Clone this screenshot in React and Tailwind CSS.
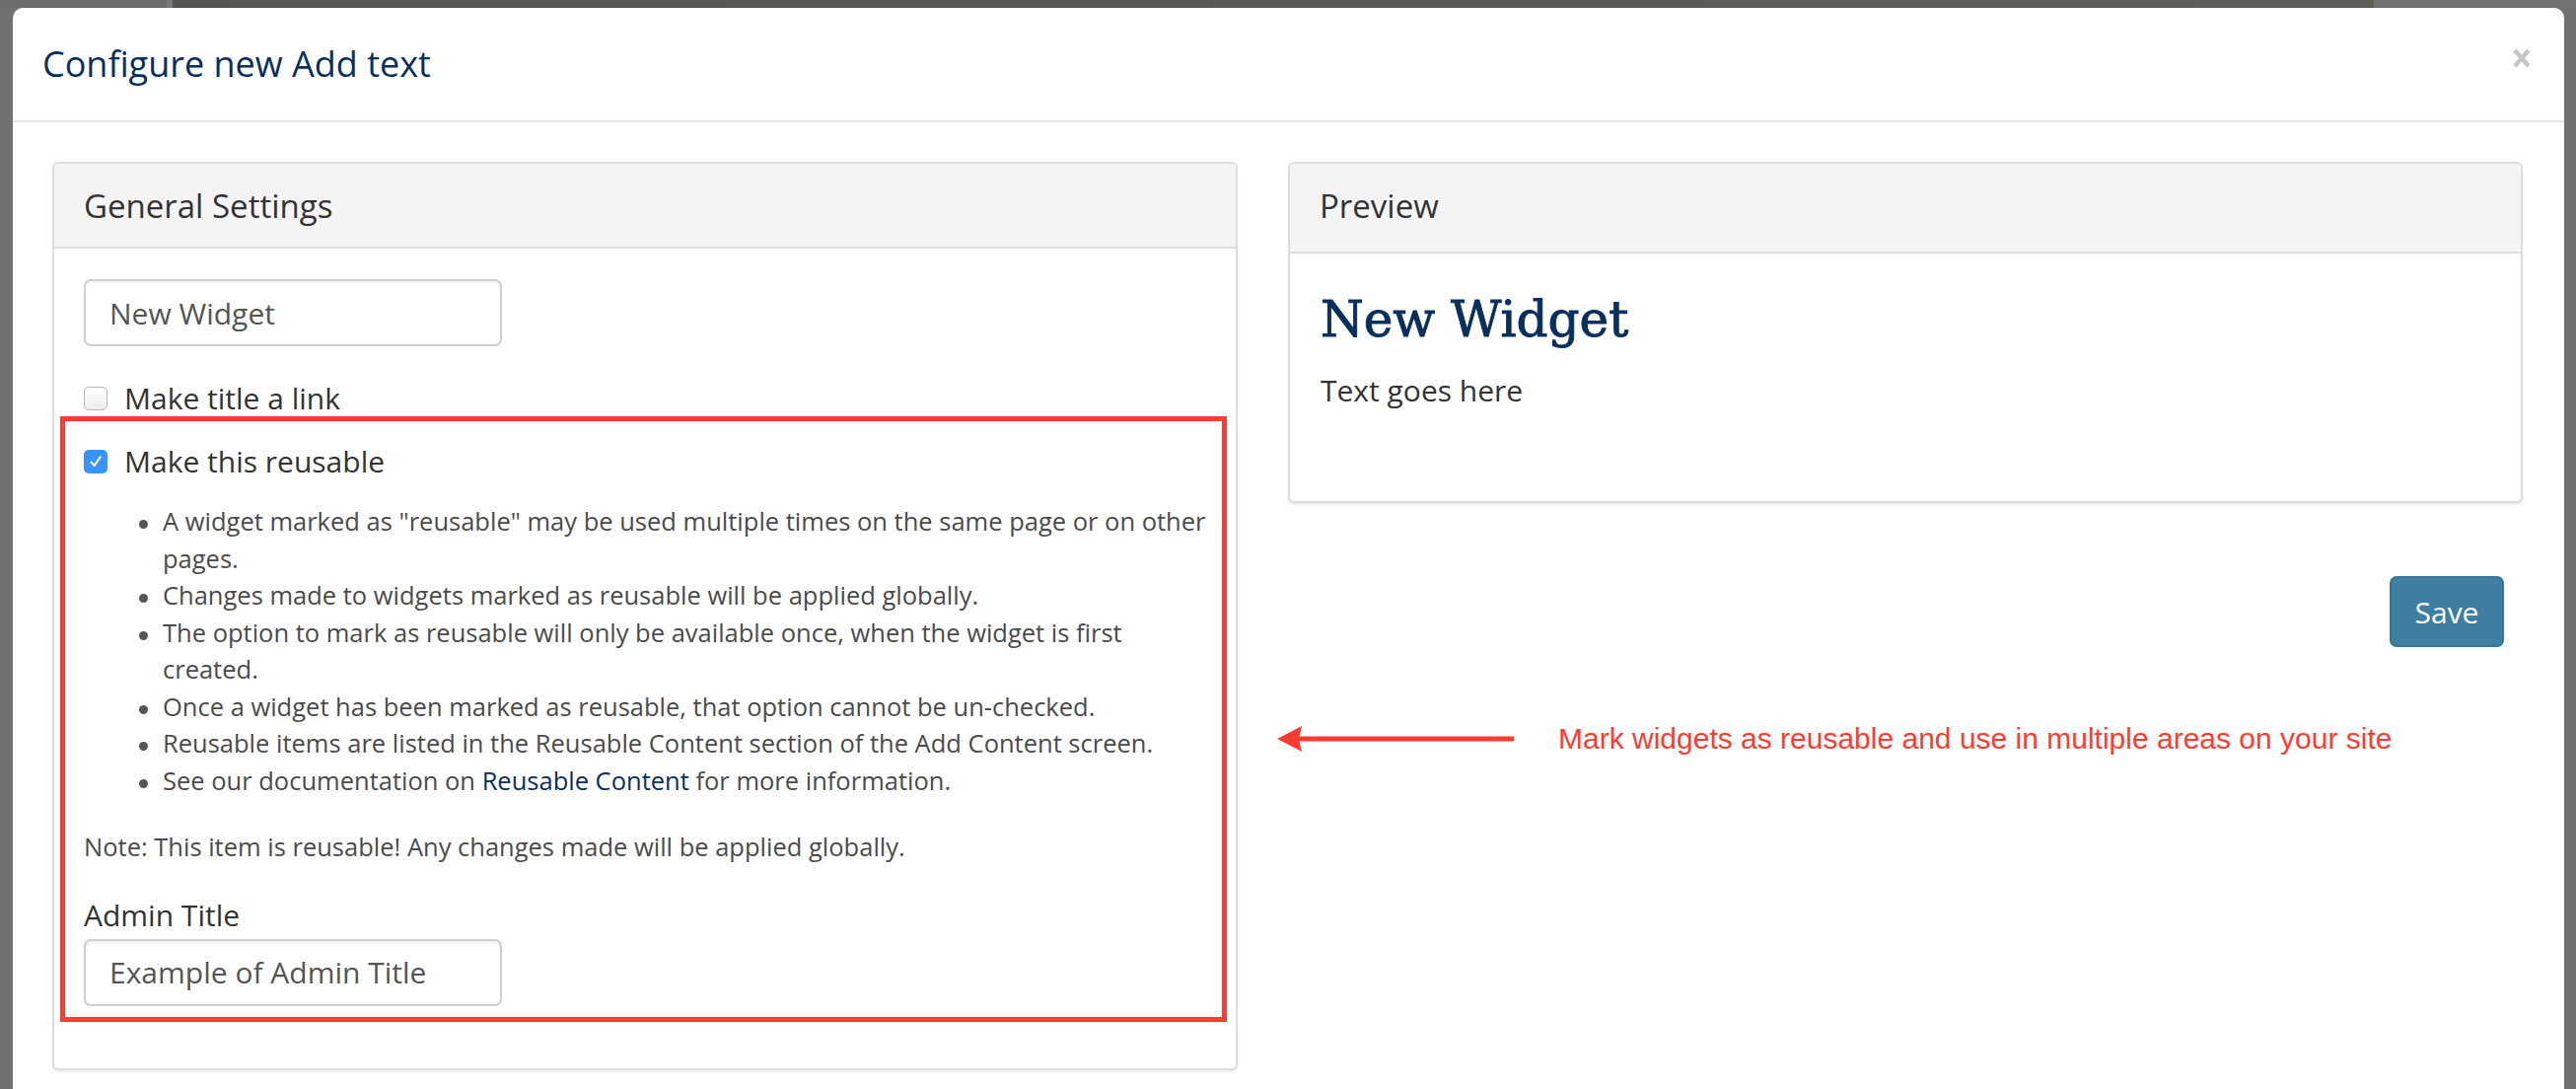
const bullets = [
  'A widget marked as "reusable" may be used multiple times on the same page or on other pages.',
  "Changes made to widgets marked as reusable will be applied globally.",
  "The option to mark as reusable will only be available once, when the widget is first created.",
  "Once a widget has been marked as reusable, that option cannot be un-checked.",
  "Reusable items are listed in the Reusable Content section of the Add Content screen.",
];

function Checkbox({ checked }) {
  if (checked) {
    return (
      <span className="inline-flex size-[24px] shrink-0 items-center justify-center rounded-[5px] bg-[#3a93f7]">
        <svg width="14" height="14" viewBox="0 0 14 14" fill="none">
          <path d="M2.5 7.5 L5.8 11 L11.5 2.5" stroke="white" strokeWidth="2.2" strokeLinecap="round" strokeLinejoin="round" />
        </svg>
      </span>
    );
  }
  return <span className="inline-block size-[24px] shrink-0 rounded-[5px] border border-[#b9b9b9] bg-gradient-to-b from-white to-[#ededed]" />;
}

function TextInput({ value }) {
  return (
    <div className="flex h-[68px] w-[424px] items-center rounded-[7px] border-2 border-[#cfcfcf] pl-[24px] text-[30px] text-[#555] shadow-[inset_0_2px_2px_rgba(0,0,0,0.06)]">
      {value}
    </div>
  );
}

function Panel({ title, headerClass, children, className }) {
  return (
    <div className={`rounded-[6px] border-2 border-[#dddddd] bg-white shadow-[0_2px_2px_rgba(0,0,0,0.08)] ${className}`}>
      <div className={`rounded-t-[5px] border-b-2 border-[#dddddd] bg-[#f4f4f4] px-[30px] text-[33px] leading-[46px] text-[#333] ${headerClass}`}>
        {title}
      </div>
      {children}
    </div>
  );
}

export default function App() {
  return (
    <div className="flex h-[1104px] w-[2612px] flex-col overflow-hidden bg-[#717171] font-['Open_Sans',sans-serif]">
      <div className="flex h-[8px] shrink-0">
        <div className="w-[169px] bg-[#6c6c6c]" />
        <div className="w-[6px] bg-[#7a7a7a]" />
        <div className="w-[2232px] bg-gradient-to-r from-[#56554f] to-[#5f5e58]" />
        <div className="flex-1 bg-[#727272]" />
      </div>

      <div className="flex flex-1 pl-[13px] pr-[12px]">
        <div className="flex flex-1 flex-col rounded-t-[10px] bg-white">
          {/* header */}
          <div className="flex items-start justify-between border-b-2 border-[#e5e5e5] pb-[32px] pl-[30px] pr-[33px] pt-[32px]">
            <h1 className="text-[36px] leading-[50px] text-[#0a2f5c]">Configure new Add text</h1>
            <svg className="mt-[9px]" width="20" height="20" viewBox="0 0 20 20">
              <path d="M3 2 L17 18 M17 2 L3 18" stroke="#c6c6c6" strokeWidth="4.5" strokeLinecap="butt" />
            </svg>
          </div>

          {/* body */}
          <div className="flex gap-[51px] pl-[40px] pr-[42px] pt-[40px]">
            <Panel title="General Settings" headerClass="pb-[18px] pt-[20px]" className="w-[1202px] shrink-0">
              <div className="px-[30px] pb-[47px] pt-[31px]">
                <TextInput value="New Widget" />

                <label className="mt-[35px] flex items-center gap-[17px] text-[30px] leading-[36px] text-[#333]">
                  <Checkbox />
                  <span>Make title a link</span>
                </label>

                <div className="-ml-[24px] -mr-[21px] border-[5px] border-[#fe3b30] pb-[11px] pl-[19px] pr-[9px] pt-[23px]">
                  <label className="flex items-center gap-[17px] text-[30px] leading-[36px] text-[#333]">
                    <Checkbox checked />
                    <span>Make this reusable</span>
                  </label>

                  <ul className="mt-[24px] text-[25.5px] leading-[37.5px] text-[#4b4b4b]">
                    {bullets.map((b) => (
                      <li key={b} className="flex items-start">
                        <span className="ml-[56px] mr-[15px] mt-[17px] size-[9px] shrink-0 rounded-full bg-[#555]" />
                        <span>{b}</span>
                      </li>
                    ))}
                    <li className="flex items-start">
                      <span className="ml-[56px] mr-[15px] mt-[17px] size-[9px] shrink-0 rounded-full bg-[#555]" />
                      <span>
                        See our documentation on <a className="text-[#0a2f5c]">Reusable Content</a> for more information.
                      </span>
                    </li>
                  </ul>

                  <p className="mt-[30px] text-[25.5px] leading-[37.5px] text-[#4b4b4b]">
                    Note: This item is reusable! Any changes made will be applied globally.
                  </p>

                  <div className="mt-[32px] text-[30px] leading-[36px] text-[#333]">Admin Title</div>
                  <div className="mt-[6px]">
                    <TextInput value="Example of Admin Title" />
                  </div>
                </div>
              </div>
            </Panel>

            <div className="flex flex-1 flex-col">
              <Panel title="Preview" headerClass="pb-[23px] pt-[20px]">
                <div className="px-[31px] pb-[94px] pt-[40px]">
                  <h2 className="font-['DejaVu_Serif',serif] text-[50px] leading-[55px] text-[#0a2f5c] [-webkit-text-stroke:1px_#0a2f5c]">
                    New Widget
                  </h2>
                  <p className="mt-[26px] text-[30px] leading-[36px] text-[#333]">Text goes here</p>
                </div>
              </Panel>

              <div className="mr-[19px] mt-[74px] flex justify-end">
                <button className="h-[72px] w-[116px] rounded-[7px] border-2 border-[#3a7699] bg-[#3d7ea1] text-[30px] text-white">
                  Save
                </button>
              </div>

              <div className="-ml-[11px] mt-[75px] flex items-center gap-[45px]">
                <svg width="240" height="26" viewBox="0 0 240 26">
                  <path d="M22 10.5 L240 10.5 L240 15.5 L22 15.5 Z" fill="#fe3b30" />
                  <path d="M0 13 L25 0 L22 13 L25 26 Z" fill="#fe3b30" />
                </svg>
                <span className="font-['Liberation_Sans',Arial,sans-serif] text-[30px] leading-[36px] text-[#fe3b30]">
                  Mark widgets as reusable and use in multiple areas on your site
                </span>
              </div>
            </div>
          </div>
        </div>
      </div>
    </div>
  );
}
